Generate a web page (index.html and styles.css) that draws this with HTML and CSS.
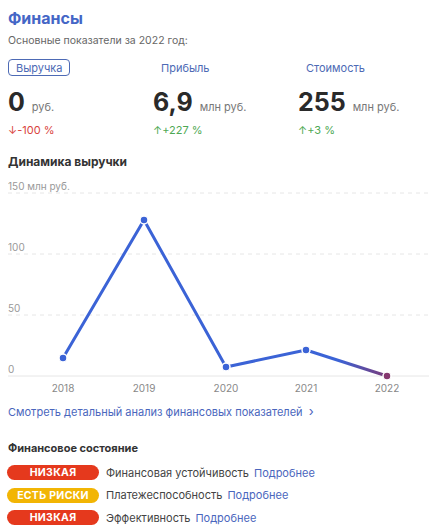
FILE: index.html
```html
<!DOCTYPE html>
<html>
<head>
<link rel="stylesheet" href="styles.css">
</head>
<body>

<div class="finance">
  <h1 class="title">Финансы</h1>
  <p class="subtitle">Основные показатели за 2022 год:</p>

  <div class="stats">
    <div class="stat">
      <span class="tab active">Выручка</span>
      <div class="value">0 <span class="unit">руб.</span></div>
      <div class="change down">↓-100 %</div>
    </div>
    <div class="stat">
      <span class="tab">Прибыль</span>
      <div class="value">6,9 <span class="unit">млн руб.</span></div>
      <div class="change up">↑+227 %</div>
    </div>
    <div class="stat">
      <span class="tab">Стоимость</span>
      <div class="value">255 <span class="unit">млн руб.</span></div>
      <div class="change up">↑+3 %</div>
    </div>
  </div>

  <h2 class="section-title">Динамика выручки</h2>

  <svg class="chart" width="421" height="220" viewBox="0 0 421 220">
    <defs>
      <linearGradient id="lastSeg" x1="298" y1="0" x2="379" y2="0" gradientUnits="userSpaceOnUse">
        <stop offset="0.4" stop-color="#3b63d6"/>
        <stop offset="1" stop-color="#7a3a78"/>
      </linearGradient>
    </defs>
    <g class="grid">
      <line x1="0" y1="14" x2="421" y2="14"/>
      <line x1="0" y1="75" x2="421" y2="75"/>
      <line x1="0" y1="136" x2="421" y2="136"/>
    </g>
    <line class="axis" x1="0" y1="197" x2="421" y2="197"/>
    <g class="ylabels">
      <text x="0" y="11">150 млн руб.</text>
      <text x="0" y="72">100</text>
      <text x="0" y="133">50</text>
      <text x="0" y="194">0</text>
    </g>
    <g class="xlabels">
      <text x="55" y="213">2018</text>
      <text x="136" y="213">2019</text>
      <text x="218" y="213">2020</text>
      <text x="298" y="213">2021</text>
      <text x="379" y="213">2022</text>
    </g>
    <polyline class="line" points="55,179 136,41 218,188 298,171"/>
    <line class="line-end" x1="298" y1="171" x2="379" y2="197"/>
    <circle class="dot" cx="55" cy="179" r="4"/>
    <circle class="dot" cx="136" cy="41" r="4"/>
    <circle class="dot" cx="218" cy="188" r="4"/>
    <circle class="dot" cx="298" cy="171" r="4"/>
    <circle class="dot last" cx="379" cy="197" r="4"/>
  </svg>

  <a class="more-link" href="#">Смотреть детальный анализ финансовых показателей <span class="chevron">›</span></a>

  <h2 class="section-title state-title">Финансовое состояние</h2>

  <ul class="states">
    <li><span class="badge red">НИЗКАЯ</span> Финансовая устойчивость <a href="#">Подробнее</a></li>
    <li><span class="badge yellow">ЕСТЬ РИСКИ</span> Платежеспособность <a href="#">Подробнее</a></li>
    <li><span class="badge red">НИЗКАЯ</span> Эффективность <a href="#">Подробнее</a></li>
  </ul>
</div>

</body>
</html>
```

FILE: styles.css
```css
body {
  margin: 0;
  padding: 8px;
  font-family: Inter, "Noto Sans", sans-serif;
  background-color: #fff;
  color: #333;
}

.title {
  margin: 0;
  font-size: 16px;
  line-height: 20px;
  font-weight: 700;
  color: #4466c6;
}

.subtitle {
  margin: 6px 0 0;
  font-size: 10.5px;
  line-height: 14px;
  color: #666;
}

.stats {
  display: grid;
  grid-template-columns: 145px 145px 145px;
  margin-top: 8px;
}

.tab {
  display: inline-block;
  padding: 0 7px;
  height: 17px;
  line-height: 16px;
  font-size: 11px;
  color: #4d6ab5;
  border: 1px solid transparent;
  border-radius: 4px;
  box-sizing: border-box;
}

.tab.active {
  border-color: #4d6ab5;
}

.value {
  margin-top: 11px;
  font-size: 25px;
  line-height: 30px;
  font-weight: 700;
  color: #2a2a2a;
}

.unit {
  font-size: 11px;
  font-weight: 400;
  color: #777;
  margin-left: 1px;
}

.change {
  margin-top: 1px;
  font-size: 11px;
  line-height: 14px;
}

.change.down {
  color: #d9443e;
}

.change.up {
  color: #4ea853;
}

.section-title {
  margin: 17px 0 0;
  font-size: 12px;
  line-height: 15px;
  font-weight: 700;
  color: #333;
}

.chart {
  display: block;
  margin-top: 10px;
  font-family: Inter, "Noto Sans", sans-serif;
}

.grid line {
  stroke: #e6e6e6;
  stroke-width: 1;
  stroke-dasharray: 4 4;
}

.axis {
  stroke: #e6e6e6;
  stroke-width: 1;
}

.ylabels text {
  font-size: 10px;
  fill: #999;
}

.xlabels text {
  font-size: 10px;
  fill: #888;
  text-anchor: middle;
}

.line {
  fill: none;
  stroke: #3b63d6;
  stroke-width: 3;
  stroke-linejoin: round;
}

.line-end {
  stroke: url(#lastSeg);
  stroke-width: 3;
}

.dot {
  fill: #3b63d6;
  stroke: #fff;
  stroke-width: 1.5;
}

.dot.last {
  fill: #86386f;
}

.more-link {
  display: block;
  margin-top: 5px;
  font-size: 11px;
  line-height: 14px;
  color: #4a66bd;
  text-decoration: none;
}

.chevron {
  margin-left: 3px;
  font-size: 13px;
}

.state-title {
  margin-top: 22px;
  font-size: 11px;
}

.states {
  list-style: none;
  margin: 9px 0 0;
  padding: 0;
}

.states li {
  display: flex;
  align-items: center;
  gap: 5px;
  height: 15px;
  margin-bottom: 7.5px;
  margin-left: -1px;
  font-size: 11px;
  color: #444;
}

.states a {
  color: #4a66bd;
  text-decoration: none;
}

.badge {
  display: inline-block;
  width: 92px;
  height: 15px;
  line-height: 15px;
  border-radius: 8px;
  text-align: center;
  font-size: 10.5px;
  font-weight: 700;
  color: #fff;
  letter-spacing: 0.3px;
  margin-right: 2px;
}

.badge.red {
  background-color: #e5391d;
}

.badge.yellow {
  background-color: #f2b504;
}
```
